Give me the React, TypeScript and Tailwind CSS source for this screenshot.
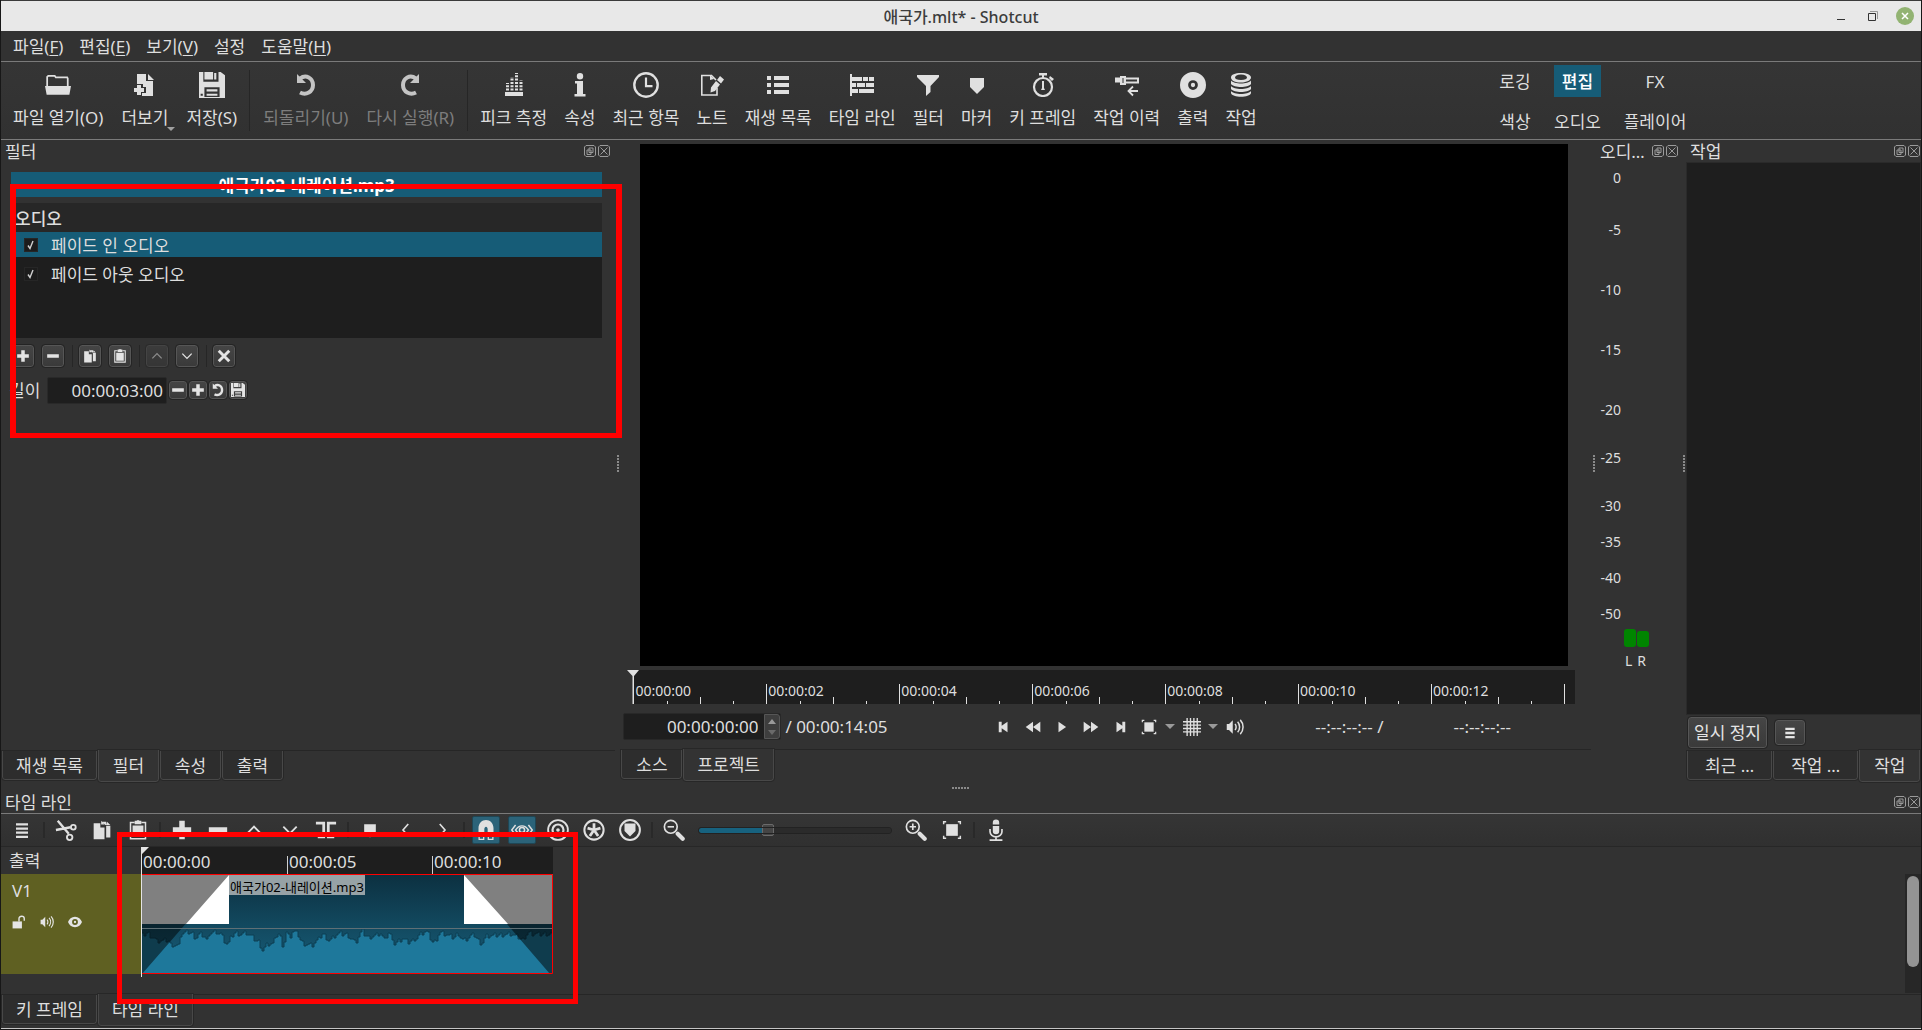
import React from "react";

type Kids = { children?: React.ReactNode };

/* ---------- icons ---------- */

function Icon({ children, size = "size-6", className = "" }: Kids & { size?: string; className?: string }) {
  return (
    <svg viewBox="0 0 24 24" className={`${size} ${className} shrink-0 fill-current`} aria-hidden="true">
      {children}
    </svg>
  );
}

const line = (w: number) => ({ fill: "none", stroke: "currentColor", strokeWidth: w });

const art: Record<string, React.ReactNode> = {
  open: (
    <>
      <path {...line(1.6)} d="M2 13V4.500l1-1h6l1 1.500h10.500l.500 1V13" />
      <path d="M0 13h24l-1.500 8h-21z" />
    </>
  ),
  addDoc: (
    <>
      <path d="M4 1h9v7h7v15H9v-3h4v-6h-3v-3H4z" />
      <path d="M15 1l6 6h-6z" />
      <path d="M4 12h4v3h3v4H8v3H4v-3H1v-4h3z" />
    </>
  ),
  save: (
    <path
      fillRule="evenodd"
      d="M0 0h4v9h14V0h2l4 3v21H0zM5 0h8v7H5zM14 1v6h2V1zM5 14v9h14v-9zM7 16h10v2H7zM7 20h10v2H7zM1.500 20v2h2v-2z"
    />
  ),
  undo: (
    <>
      <path {...line(4)} d="M6 5.500C12 1 19 5 19 12s-7 10.500-13 7.500" />
      <path d="M3 1v9h9z" />
    </>
  ),
  redo: (
    <>
      <path {...line(4)} d="M18 5.500C12 1 5 5 5 12s7 10.500 13 7.500" />
      <path d="M21 1v9h-9z" />
    </>
  ),
  peak: (
    <>
      <path d="M3 19h18v4H3z" />
      <path {...line(3)} strokeDasharray="2 1.300" d="M5.500 17.500V10M10 17.500V4M14.500 17.500V0M19 17.500V7" />
    </>
  ),
  info: <path d="M12 0a3.200 3.200 0 100 6.400A3.200 3.200 0 0012 0zM7 8h8v13h2.500v2.500h-11V21H9V10.500H7z" />,
  clock: (
    <>
      <circle {...line(2.2)} cx="12" cy="12" r="10.800" />
      <path {...line(2)} d="M12 5v8h6" />
    </>
  ),
  note: (
    <>
      <path {...line(1.6)} d="M17 15v7H1.800V2.500H11M11 2l5 5" />
      <path d="M10 2l4 4-4 1zM20 3l4 3.500-3 4L17 7zM16 8l4 3.500-5 6.500-4.500 1.500.500-5z" />
    </>
  ),
  list: <path d="M1 3h4v4H1zM8 3h15v4H8zM1 10h4v4H1zM8 10h15v4H8zM1 17h4v4H1zM8 17h15v4H8z" />,
  timeline: (
    <path d="M0 1h2v22H0zM2 4h10v4H2zM13 4h5v4h-5zM19 4h5v4h-5zM2 10h4v4H2zM7 10h8v4H7zM16 10h8v4h-8zM2 16h6v4H2zM9 16h15v4H9z" />
  ),
  filter: <path d="M1 2h22v2l-8.500 9v6L10 23V13L1 4z" />,
  marker: <path d="M5 5h14v9l-7 7-7-7z" />,
  stopwatch: (
    <>
      <circle {...line(2.2)} cx="12" cy="14" r="9" />
      <path d="M8 0h8v2.500h-3V5h-2V2.500H8zM11 8h2v7l1 2h-4l1-2zM19 3l4 3-2 2-3-3z" />
    </>
  ),
  history: (
    <>
      <path fillRule="evenodd" d="M0 4.500h5V3h6v1.500h13v6H11V12H5v-2.500H0zM7.500 5v5h1V5zM11 6.500v2h11v-2z" />
      <path {...line(1.800)} d="M14 18h9M18 13.500L13.500 18l4.500 4.500" />
    </>
  ),
  disc: (
    <path
      fillRule="evenodd"
      d="M12 0a12 12 0 100 24 12 12 0 000-24zm0 7.500a4.500 4.500 0 110 9 4.500 4.500 0 010-9zm0 2.500a2 2 0 100 4 2 2 0 000-4z"
    />
  ),
  jobs: (
    <>
      <path fillRule="evenodd" d="M12 0c6 0 10 2 10 4.500S18 9.500 12 9.500 2 7.500 2 4.500 6 0 12 0zm0 1.500C8 1.500 6 3 6 4.500S8 7 12 7s6-1 6-2.500-2-3-6-3z" />
      <path d="M2 7.500c3 4 17 4 20 0v3.500c-3 4-17 4-20 0zM2 13c3 4 17 4 20 0v3c-3 4-17 4-20 0zM2 18c3 4 17 4 20 0v2c-1 5-19 5-20 0z" />
    </>
  ),
  plus: <path d="M9 2h6v7h7v6h-7v7H9v-7H2V9h7z" />,
  minus: <path d="M2 9h20v6H2z" />,
  copy: (
    <path d="M2 4h8v5h5v14H2zM11 1l4 4.500h-4zM17 7h5v14h-5v-13zM12 2h5l1 4h-2zM18 2l4 4h-4z" />
  ),
  paste: (
    <>
      <path {...line(1.800)} d="M8 3H3v19.500h18V3h-5" />
      <path d="M8 1h2l2-1 2 1h2v4H8zM5.500 6.500h13V20h-13z" />
    </>
  ),
  up: <path {...line(2.200)} d="M4 16l8-8 8 8" />,
  down: <path {...line(2.200)} d="M4 8l8 8 8-8" />,
  left: <path {...line(2.200)} d="M15 4l-7 8 7 8" />,
  right: <path {...line(2.200)} d="M9 4l7 8-7 8" />,
  close: <path {...line(5)} d="M3 3l18 18M21 3L3 21" />,
  menu: <path d="M4 3h16v3H4zM4 8.500h16v3H4zM4 14h16v3H4zM4 19.500h16v3H4z" />,
  menu3: <path d="M4 3h16v4H4zM4 10h16v4H4zM4 17h16v4H4z" />,
  cut: (
    <>
      <circle {...line(2)} cx="20" cy="9" r="2.600" />
      <circle {...line(2)} cx="16" cy="20" r="3" />
      <path {...line(2.600)} d="M3 2l12 14M1 12l16-3" />
    </>
  ),
  split: <path d="M1 3h10v18H8V6H1zM13 3h10v3h-7v15h-3zM3 19h5v2H3zM16 19h5v2h-5z" />,
  magnet: (
    <path
      fillRule="evenodd"
      d="M3 24V10C3 4 7 0 12 0s9 4 9 10v14h-7V11c0-2-1-3-2-3s-2 1-2 3v13zM4.500 19v3.500h4V19zM15.500 19v3.500h4V19z"
    />
  ),
  scrub: (
    <>
      <path {...line(1.600)} d="M5 12c4-6 10-6 14 0-4 6-10 6-14 0zM5 6.500L.8 12 5 17.500M19 6.500l4.200 5.500-4.200 5.500" />
      <circle {...line(1.600)} cx="12" cy="12" r="2.800" />
    </>
  ),
  ripple: (
    <>
      <circle {...line(2)} cx="12" cy="12" r="10.800" />
      <circle {...line(2.400)} cx="12" cy="12" r="6" />
      <circle cx="12" cy="12" r="2" />
    </>
  ),
  rippleAll: (
    <>
      <circle {...line(2.200)} cx="12" cy="12" r="10.500" />
      <path {...line(3)} d="M12 4.500V12M5 10l7 2M19 10l-7 2M7.500 18.500L12 12M16.500 18.500L12 12" />
    </>
  ),
  rippleMark: (
    <>
      <circle {...line(2.200)} cx="12" cy="12" r="10.800" />
      <path d="M6 5h12v8l-6 6-6-6z" />
    </>
  ),
  zoomOut: (
    <>
      <circle {...line(1.800)} cx="8.500" cy="8.500" r="7" />
      <path {...line(1.800)} d="M5 8.500h7" />
      <path {...line(4.500)} strokeLinecap="round" d="M16 16l5.500 5.500" />
    </>
  ),
  zoomIn: (
    <>
      <circle {...line(1.800)} cx="8.500" cy="8.500" r="7" />
      <path {...line(1.800)} d="M5 8.500h7M8.500 5v7" />
      <path {...line(4.500)} strokeLinecap="round" d="M16 16l5.500 5.500" />
    </>
  ),
  fit: (
    <>
      <path d="M5 5h14v14H5z" />
      <path {...line(1.800)} d="M2 5V2h3M19 2h3v3M22 19v3h-3M5 22H2v-3" />
    </>
  ),
  mic: (
    <>
      <path d="M8.500 4a3.500 3.500 0 017 0v2h-7zM8.500 7.500h7V13a3.500 3.500 0 01-7 0z" />
      <path {...line(1.800)} d="M5.500 11v3c0 3 3 5.500 6.500 5.500s6.500-2.500 6.500-5.500v-3M12 19v3M5 23h14" />
    </>
  ),
  first: <path d="M3 3h5v7l10-7v18L8 14v7H3z" />,
  rewind: <path d="M12 4v16L1 12zM23 4v16l-11-8z" />,
  play: <path d="M6 3l13 9-13 9z" />,
  forward: <path d="M1 4l11 8-11 8zM12 4l11 8-11 8z" />,
  last: <path d="M21 3h-5v7L6 3v18l10-7v7h5z" />,
  grid: <path {...line(1.800)} d="M5.500 0v24M10 0v24M14.500 0v24M19 0v24M0 5h24M0 9.500h24M0 14h24M0 18.500h24" />,
  speaker: (
    <>
      <path d="M1 8h3l5-5v18l-5-5H1z" />
      <path {...line(2)} d="M12 8c2 2 2 6 0 8M15.500 5c3.500 4 3.500 10 0 14M19 2.500c5 5.500 5 13.500 0 19" />
    </>
  ),
  unlock: (
    <>
      <path d="M1 11h16v12H1z" />
      <path {...line(2.400)} d="M12 11V6c0-5 9-5 9 0v4" />
    </>
  ),
  eye: (
    <path
      fillRule="evenodd"
      d="M12 3C6 3 2 7 0 12c2 5 6 9 12 9s10-4 12-9c-2-5-6-9-12-9zm0 4a5 5 0 110 10 5 5 0 010-10zm0 3a2 2 0 100 4 2 2 0 000-4z"
    />
  ),
};

/* ---------- shared pieces ---------- */

function DockButtons() {
  const cls = "grid size-3 place-items-center text-[#9a9a9a]";
  return (
    <span className="mb-0.5 flex gap-0.5">
      <button className={cls} aria-label="분리">
        <svg viewBox="0 0 12 12" className="size-3 fill-none stroke-current">
          <path d="M2 .5h8l1.500 1.500v8L10 11.500H2L.5 10V2zM5 3h4v4.500H5zM3 5h4v4.500H3z" />
        </svg>
      </button>
      <button className={cls} aria-label="닫기">
        <svg viewBox="0 0 12 12" className="size-3 fill-none stroke-current">
          <path d="M2 .5h8l1.500 1.500v8L10 11.500H2L.5 10V2zM2.500 2.500l7 7M9.500 2.500l-7 7" />
        </svg>
      </button>
    </span>
  );
}

function DockTitle({ title }: { title: string }) {
  return (
    <div className="flex h-5 shrink-0 items-center justify-between pr-px pl-1">
      <h2 className="leading-[22px]">{title}</h2>
      <DockButtons />
    </div>
  );
}

function Tabs({ items, active, wide }: { items: string[]; active: number; wide?: boolean }) {
  return (
    <div role="tablist" className="flex h-8 shrink-0 items-start gap-px border-t border-[#262626] pl-px">
      {items.map((t, i) => (
        <button
          key={t}
          role="tab"
          aria-selected={i === active}
          className={
            "min-w-[61px] rounded-b-[3px] border border-t-0 border-[#484848] whitespace-nowrap leading-[30px] outline-1 outline-[#272727] " +
            (wide && i !== active ? "px-[17px] " : "px-[13px] ") +
            (i === active ? "-mt-px h-8 bg-[#333] pt-px" : "h-[29px] bg-[#2d2d2d]")
          }
        >
          {t}
        </button>
      ))}
    </div>
  );
}

function Grip({ vertical }: { vertical?: boolean }) {
  return (
    <div
      className={
        vertical
          ? "h-[18px] w-0.5 bg-[repeating-linear-gradient(#8a8a8a_0_2px,transparent_2px_3px)]"
          : "h-0.5 w-[18px] bg-[repeating-linear-gradient(90deg,#8a8a8a_0_2px,transparent_2px_3px)]"
      }
    />
  );
}

function Splitter() {
  return (
    <div className="flex w-[5px] shrink-0 justify-center pt-[315px]">
      <Grip vertical />
    </div>
  );
}

/* ---------- top bars ---------- */

function TitleBar() {
  return (
    <header className="relative flex h-[31px] items-center justify-center border-t border-[#3a3a3a] bg-[#e8e8e8] font-medium text-[#3c3c3c]">
      <h1 className="pt-0.5 text-base leading-7">애국가.mlt* - Shotcut</h1>
      <div className="absolute right-[7px] flex items-center gap-3.5">
        <button aria-label="최소화" className="grid size-[18px] place-items-center">
          <span className="mt-1.5 h-px w-2 bg-[#333]" />
        </button>
        <button aria-label="최대화" className="grid size-[18px] place-items-center">
          <svg viewBox="0 0 12 12" className="size-3 fill-none">
            <path d="M3 1.500h7.500V9" stroke="#999" />
            <path d="M1.500 3.500h7v7h-7z" stroke="#333" />
          </svg>
        </button>
        <button aria-label="닫기" className="grid size-[18px] place-items-center rounded-full bg-[#92b372]">
          <svg viewBox="0 0 8 8" className="size-2 stroke-white" strokeWidth="1.500">
            <path d="M1 1l6 6M7 1L1 7" />
          </svg>
        </button>
      </div>
    </header>
  );
}

const menus: [string, string][] = [
  ["파일", "F"],
  ["편집", "E"],
  ["보기", "V"],
  ["설정", ""],
  ["도움말", "H"],
];

function MenuBar() {
  return (
    <nav className="flex h-[30px] items-center pt-0.5 pl-1">
      {menus.map(([name, key]) => (
        <button key={name} className="px-2 leading-7">
          {name}
          {key && (
            <>
              (<span className="underline underline-offset-2">{key}</span>)
            </>
          )}
        </button>
      ))}
    </nav>
  );
}

function Tool({ icon, label, off, arrow, tight }: { icon: string; label: string; off?: boolean; arrow?: boolean; tight?: boolean }) {
  const large = icon === "save" || icon === "clock" || icon === "disc" || icon === "open";
  return (
    <button
      disabled={off}
      className={`relative flex flex-col items-center gap-1.5 pt-2.5 pl-[9px] whitespace-nowrap ${tight ? "pr-2" : "pr-[9px]"} ${off ? "text-[#7d7d7d]" : ""}`}
    >
      <Icon size={large ? "size-[26px]" : "size-6 my-px"} className={off ? "text-[#c4c4c4]" : "text-[#e0e0e0]"}>
        {art[icon]}
      </Icon>
      <span className="leading-7">{label}</span>
      {arrow && (
        <span className="absolute right-0.5 bottom-2 border-x-4 border-t-4 border-x-transparent border-t-[#a0a0a0]" />
      )}
    </button>
  );
}

function VSep() {
  return <span className="my-2 w-px shrink-0 bg-[#262626]" />;
}

const tools: [string, string][] = [
  ["peak", "피크 측정"],
  ["info", "속성"],
  ["clock", "최근 항목"],
  ["note", "노트"],
  ["list", "재생 목록"],
  ["timeline", "타임 라인"],
  ["filter", "필터"],
  ["marker", "마커"],
  ["stopwatch", "키 프레임"],
  ["history", "작업 이력"],
  ["disc", "출력"],
  ["jobs", "작업"],
];

function ToolBar() {
  return (
    <div className="flex h-[79px] shrink-0 border-y border-[#7a7a7a] bg-linear-to-b from-[#353535] to-[#313131] pl-[3px]">
      <Tool icon="open" label="파일 열기(O)" />
      <Tool icon="addDoc" label="더보기" arrow />
      <Tool icon="save" label="저장(S)" />
      <span className="w-[3px]" />
      <VSep />
      <span className="w-1" />
      <Tool icon="undo" label="되돌리기(U)" off />
      <Tool icon="redo" label="다시 실행(R)" off />
      <span className="w-1" />
      <VSep />
      <span className="w-[3px]" />
      {tools.map(([i, l]) => (
        <Tool key={l} icon={i} label={l} tight />
      ))}
      <div className="mr-[228px] ml-auto grid auto-rows-[32px] grid-cols-[46px_47px_76px] gap-x-4 gap-y-2 pt-[3px]">
        {["로깅", "편집", "FX", "색상", "오디오", "플레이어"].map((l) => (
          <button
            key={l}
            className={`pt-0.5 whitespace-nowrap ${l === "편집" ? "bg-[#165c77] font-medium text-white" : ""} ${l === "오디오" ? "-mx-2" : ""}`}
          >
            {l}
          </button>
        ))}
      </div>
    </div>
  );
}

/* ---------- filter dock ---------- */

const raised =
  "grid place-items-center rounded-[3px] border border-[#565656] bg-linear-to-b from-[#454545] to-[#3a3a3a] outline-1 outline-[#242424] text-[#e4e4e4]";

function FilterButton({ icon, label, off }: { icon: string; label: string; off?: boolean }) {
  return (
    <button disabled={off} aria-label={label} className={`${raised} h-[22px] w-[22px] ${off ? "opacity-50" : ""}`}>
      <Icon size="size-3.5">{art[icon]}</Icon>
    </button>
  );
}

function MiniButton({ icon, label }: { icon: string; label: string }) {
  return (
    <button aria-label={label} className={`${raised} h-[18px] w-[18px]`}>
      <Icon size="size-3.5">{art[icon]}</Icon>
    </button>
  );
}

function FilterRow({ name, selected }: { name: string; selected?: boolean }) {
  return (
    <li className={selected ? "h-[25px] bg-[#165c77]" : "mt-1 h-[25px]"}>
      <label className="flex h-full items-center gap-[13px] pl-[13px]">
        <span className="grid size-3.5 place-items-center">
          <input
            type="checkbox"
            defaultChecked
            className="col-start-1 row-start-1 size-3.5 appearance-none border border-[#262626] bg-[#1c1c1c]"
          />
          <svg viewBox="0 0 14 14" className="pointer-events-none col-start-1 row-start-1 size-3.5 fill-none stroke-[#cfcfcf]" strokeWidth="1.400">
            <path d="M4 7.500l2 3 3-7.500" />
          </svg>
        </span>
        <span className="pt-0.5 leading-6">{name}</span>
      </label>
    </li>
  );
}

function FilterDock() {
  const sep = <span className="h-[22px] w-px bg-[#262626]" />;
  return (
    <section className="flex w-[32%] shrink-0 flex-col">
      <div className="pt-0.5 pr-1">
        <DockTitle title="필터" />
      </div>
      <div className="relative mr-[13px] ml-2.5 flex-1 pt-2.5">
        <div className="h-[25px] overflow-hidden bg-[#165c77] text-center leading-7 font-bold text-white">애국가02-내레이션.mp3</div>
        <div className="mt-1.5 h-[135px] bg-[#1e1e1e]">
          <h3 className="h-[29px] bg-[#272727] pl-1 leading-8 font-medium">오디오</h3>
          <ul>
            <FilterRow name="페이드 인 오디오" selected />
            <FilterRow name="페이드 아웃 오디오" />
          </ul>
        </div>
        <div className="mt-[7px] flex items-center gap-2 pl-px">
          <FilterButton icon="plus" label="추가" />
          <FilterButton icon="minus" label="제거" />
          {sep}
          <span className="-ml-0.5 flex gap-2">
            <FilterButton icon="copy" label="복사" />
            <FilterButton icon="paste" label="붙여넣기" />
          </span>
          {sep}
          <span className="-ml-0.5 flex gap-2">
            <FilterButton icon="up" label="위로" off />
            <FilterButton icon="down" label="아래로" />
          </span>
          {sep}
          <span className="-ml-0.5">
            <FilterButton icon="close" label="선택 해제" />
          </span>
        </div>
        <div className="mt-2 flex items-center gap-0.5">
          <label htmlFor="len" className="-ml-0.5 w-9 pt-0.5 leading-7">길이</label>
          <input
            id="len"
            defaultValue="00:00:03:00"
            className="h-[27px] w-[120px] rounded-xs border border-[#292929] bg-[#1e1e1e] pr-[3px] text-right"
          />
          <MiniButton icon="minus" label="줄이기" />
          <MiniButton icon="plus" label="늘리기" />
          <MiniButton icon="undo" label="초기화" />
          <MiniButton icon="save" label="저장" />
        </div>
        <div className="pointer-events-none absolute top-[22px] -right-5 -left-px h-[254px] border-x-[6px] border-y-[5px] border-[#f00]" />
      </div>
      <Tabs items={["재생 목록", "필터", "속성", "출력"]} active={1} />
    </section>
  );
}

/* ---------- player ---------- */

function PlayerRuler() {
  const marks = ["00:00:00", "00:00:02", "00:00:04", "00:00:06", "00:00:08", "00:00:10", "00:00:12"];
  return (
    <div className="relative mr-4 ml-[13px] flex h-[34px] shrink-0 items-end bg-[#1e1e1e]">
      {marks.map((m) => (
        <div key={m} className="relative h-5 flex-1 border-l border-[#e0e0e0] pl-px text-sm leading-3.5">
          {m}
          <span className="absolute bottom-0 left-1/4 h-[3px] w-px bg-[#e0e0e0]" />
          <span className="absolute bottom-0 left-1/2 h-[7px] w-px bg-[#e0e0e0]" />
          <span className="absolute bottom-0 left-3/4 h-[3px] w-px bg-[#e0e0e0]" />
        </div>
      ))}
      <div className="h-5 w-[11px] border-l border-[#e0e0e0]" />
      <svg viewBox="0 0 12 34" className="absolute top-0 -left-[6px] h-[34px] w-3 fill-[#e0e0e0]">
        <path d="M0 0h12L7 6v28H5.500V6z" />
      </svg>
    </div>
  );
}

function Transport() {
  const arrow = <span className="border-x-[5px] border-t-[5px] border-x-transparent border-t-[#9a9a9a]" />;
  const ic = (name: string, label: string, size = "size-3.5") => (
    <button aria-label={label} className="grid w-[29px] place-items-center text-[#e0e0e0]">
      <Icon size={size}>{art[name]}</Icon>
    </button>
  );
  return (
    <div className="flex h-[45px] shrink-0 items-center pl-[3px]">
      <div className="flex h-[27px] w-[158px] rounded-xs border border-[#282828] bg-[#1e1e1e]">
        <input aria-label="현재 위치" defaultValue="00:00:00:00" className="w-0 flex-1 bg-transparent pr-1.5 text-right" />
        <span className="flex w-4 flex-col items-center justify-center gap-1.5 rounded-r-[3px] border border-[#565656] bg-[#3e3e3e]">
          <button aria-label="증가" className="border-x-4 border-b-[5px] border-x-transparent border-b-[#9a9a9a]" />
          <button aria-label="감소" className="border-x-4 border-t-[5px] border-x-transparent border-t-[#6a6a6a]" />
        </span>
      </div>
      <span className="pl-1 leading-7 whitespace-nowrap">/ 00:00:14:05</span>
      <div className="mr-[66px] ml-auto flex items-center">
        {ic("first", "처음")}
        {ic("rewind", "되감기", "size-4")}
        {ic("play", "재생")}
        {ic("forward", "빨리 감기", "size-4")}
        {ic("last", "끝")}
        {ic("fit", "확대", "size-4")}
        <span className="-mx-px grid w-4 place-items-center">{arrow}</span>
        {ic("grid", "격자", "size-[18px]")}
        <span className="-mx-px grid w-4 place-items-center">{arrow}</span>
        {ic("speaker", "음량", "size-[18px]")}
      </div>
      <span className="leading-7">--:--:--:-- /</span>
      <span className="pr-20 pl-[70px] leading-7">--:--:--:--</span>
    </div>
  );
}

function Player() {
  return (
    <section className="flex min-w-0 flex-1 flex-col">
      <div className="mt-1 mr-[23px] mb-1 ml-5 flex-1 bg-black" />
      <PlayerRuler />
      <Transport />
      <div className="-mb-px">
        <Tabs items={["소스", "프로젝트"]} active={1} />
      </div>
      <div className="h-0.5" />
    </section>
  );
}

/* ---------- right docks ---------- */

function AudioDock() {
  const marks: [string, string][] = [
    ["0", ""],
    ["-5", "mt-8"],
    ["-10", "mt-10"],
    ["-15", "mt-10"],
    ["-20", "mt-10"],
    ["-25", "mt-7"],
    ["-30", "mt-7"],
    ["-35", "mt-4"],
    ["-40", "mt-4"],
    ["-50", "mt-4"],
  ];
  return (
    <section className="w-[85px] shrink-0 pt-0.5">
      <div className="pr-0.5">
        <DockTitle title="오디…" />
      </div>
      <div className="mt-1.5 flex w-[25px] flex-col text-right text-sm leading-5">
        {marks.map(([m, gap]) => (
          <span key={m} className={gap}>
            {m}
          </span>
        ))}
      </div>
      <div className="mt-[5px] ml-7 flex items-end gap-px">
        <span className="h-[18px] w-3 rounded-[3px] bg-[#008500]" />
        <span className="h-4 w-3 rounded-[3px] bg-[#008500]" />
      </div>
      <div className="mt-1 ml-[29px] flex gap-[5px] text-sm leading-5">
        <span>L</span>
        <span>R</span>
      </div>
    </section>
  );
}

function JobsDock() {
  return (
    <section className="flex w-[235px] shrink-0 flex-col pt-0.5">
      <DockTitle title="작업" />
      <div className="flex-1 border border-[#2a2a2a] bg-[#1e1e1e]" />
      <div className="flex h-[35px] items-center gap-2 pl-0.5">
        <button className={`${raised} h-[31px] px-[5px] leading-7`}>일시 정지</button>
        <button aria-label="메뉴" className={`${raised} h-[25px] w-[30px]`}>
          <Icon size="size-3.5">{art.menu3}</Icon>
        </button>
      </div>
      <Tabs items={["최근 …", "작업 …", "작업"]} active={2} wide />
    </section>
  );
}

/* ---------- timeline ---------- */

function TB({ icon, label, on, size = "size-[22px]" }: { icon: string; label: string; on?: boolean; size?: string }) {
  return (
    <button
      aria-label={label}
      className={`grid h-7 w-7 shrink-0 place-items-center text-[#e0e0e0] ${on ? "rounded-xs border border-[#1f4654] bg-[#2b6379]" : ""}`}
    >
      <Icon size={size}>{art[icon]}</Icon>
    </button>
  );
}

function TimelineTools() {
  const sep = <span className="-mx-px h-4 w-0.5 shrink-0 bg-[#292929]" />;
  return (
    <div className="flex h-[34px] items-center gap-2 border-t border-b border-t-[#7a7a7a] border-b-[#272727] bg-linear-to-b from-[#353535] to-[#303030] pl-[7px]">
      <TB icon="menu" label="메뉴" size="size-[18px]" />
      {sep}
      <TB icon="cut" label="잘라내기" />
      <TB icon="copy" label="복사" size="size-5" />
      <TB icon="paste" label="붙여넣기" size="size-5" />
      {sep}
      <TB icon="plus" label="추가" />
      <TB icon="minus" label="제거" />
      <TB icon="up" label="들어내기" size="size-5" />
      <TB icon="down" label="덮어쓰기" size="size-5" />
      <TB icon="split" label="나누기" />
      {sep}
      <TB icon="marker" label="마커" size="size-5" />
      <TB icon="left" label="이전 마커" size="size-[18px]" />
      <TB icon="right" label="다음 마커" size="size-[18px]" />
      {sep}
      <TB icon="magnet" label="스냅" on size="size-5" />
      <TB icon="scrub" label="드래그 스크럽" on size="size-[22px]" />
      <TB icon="ripple" label="리플" />
      <TB icon="rippleAll" label="모든 트랙 리플" />
      <TB icon="rippleMark" label="마커 리플" />
      {sep}
      <TB icon="zoomOut" label="축소" />
      <input
        type="range"
        aria-label="확대 비율"
        defaultValue={35}
        className="mx-[3px] h-[5px] w-[192px] appearance-none rounded-xs bg-[linear-gradient(90deg,#17627f_35%,#2b2b2b_35%)] outline-1 outline-[#222] [&::-webkit-slider-thumb]:size-3 [&::-webkit-slider-thumb]:appearance-none [&::-webkit-slider-thumb]:rounded-xs [&::-webkit-slider-thumb]:border [&::-webkit-slider-thumb]:border-[#6a6a6a] [&::-webkit-slider-thumb]:bg-[#454545]"
      />
      <TB icon="zoomIn" label="확대" />
      <TB icon="fit" label="맞춤" size="size-5" />
      {sep}
      <TB icon="mic" label="녹음" />
    </div>
  );
}

const peaks: [number, number][] = [
  [0, 61], [4, 58], [10, 62], [14, 66], [20, 66], [26, 66], [28, 70], [36, 71], [38, 60], [44, 58], [50, 59], [53, 64], [57, 59],
  [62, 62], [65, 67], [68, 58], [74, 57], [78, 59], [82, 66], [85, 70], [88, 64], [92, 58], [98, 59], [104, 58], [108, 61],
  [112, 65], [116, 67], [120, 75], [124, 70], [131, 69], [134, 61], [137, 59], [141, 73], [143, 60], [145, 56], [147, 66],
  [149, 56], [155, 59], [159, 67], [165, 70], [170, 70], [175, 66], [180, 59], [187, 66], [195, 59], [205, 60], [209, 64],
  [213, 68], [219, 56], [225, 63], [238, 59], [242, 66], [246, 58], [250, 63], [252, 69], [260, 64], [266, 68], [274, 63],
  [283, 56], [286, 60], [291, 69], [297, 58], [304, 60], [311, 64], [315, 58], [321, 66], [331, 60], [339, 69], [344, 61],
  [354, 61], [368, 59], [380, 65], [385, 58], [395, 60], [408, 59],
];

const wave = (() => {
  let d = "";
  let k = 0;
  for (let x = 0; x <= 408; x += 2) {
    while (k < peaks.length - 2 && peaks[k + 1][0] <= x) k++;
    const [x0, y0] = peaks[k];
    const [x1, y1] = peaks[k + 1];
    const jitter = ((x * 37) % 11) / 2 - 2;
    const y = Math.round(y0 + ((y1 - y0) * (x - x0)) / (x1 - x0) + jitter);
    d += `${x ? "V" : "M0 "}${Math.max(55, y)}H${x + 2}`;
  }
  return d;
})();

function Clip() {
  return (
    <div className="relative h-[100px] w-[411px]">
      <svg viewBox="0 0 411 100" className="block h-[100px] w-[411px]">
        <defs>
          <linearGradient id="clip" x1="0" y1="0" x2="0" y2="1">
            <stop offset="0" stopColor="#0c3040" />
            <stop offset="1" stopColor="#18607c" />
          </linearGradient>
        </defs>
        <path fill="url(#clip)" d="M0 0h411v100H0z" />
        <path fill="#1e789b" d={`${wave}V100H0z`} />
        <path fill="none" stroke="#0d3e52" d={wave} />
        <path fill="#000" fillOpacity=".5" d="M0 0h87L0 100zM322 0h89v100h-3z" />
        <path stroke="#5f6f75" d="M0 54.500h411" />
        <path fill="#808080" d="M0 0h87v50H0zM322 0h89v50h-89z" />
        <path fill="#fff" d="M87 1v49H44zM322 1v49h44z" />
        <path fill="none" stroke="#f00" d="M0 .5h410.500v99H0" />
      </svg>
      <span className="absolute top-px left-[87px] h-5 overflow-hidden bg-[#97a2a6] px-px text-[13px] leading-6 whitespace-nowrap text-black">
        애국가02-내레이션.mp3
      </span>
    </div>
  );
}

function Timeline() {
  return (
    <section className="relative flex shrink-0 flex-col pb-0.5">
      <DockTitle title="타임 라인" />
      <TimelineTools />
      <div className="flex min-h-[147px]">
        <div className="w-[141px] shrink-0">
          <div className="h-[27px] pl-2 leading-7">출력</div>
          <div className="h-[100px] bg-[#5f6022] pt-[3px] pl-[11px]">
            <div className="leading-7">V1</div>
            <div className="mt-2.5 flex gap-3.5 text-[#e4e4e4]">
              <button aria-label="잠금"><Icon size="size-3.5">{art.unlock}</Icon></button>
              <button aria-label="음소거"><Icon size="size-3.5">{art.speaker}</Icon></button>
              <button aria-label="숨기기"><Icon size="size-3.5">{art.eye}</Icon></button>
            </div>
          </div>
        </div>
        <div className="relative w-[411px] shrink-0">
          <div className="flex h-[27px] items-end overflow-hidden bg-[#1e1e1e]">
            {["00:00:00", "00:00:05", "00:00:10"].map((t, i) => (
              <span key={t} className={`h-[18px] w-[145px] shrink-0 pl-px leading-3 ${i ? "border-l border-[#d0d0d0]" : ""}`}>
                {t}
              </span>
            ))}
          </div>
          <Clip />
          <svg viewBox="0 0 8 130" className="absolute top-0 -left-px h-[130px] w-2 fill-[#e4e4e4]">
            <path d="M0 0h8L1 7v123H0z" />
          </svg>
        </div>
        <div className="mt-[27px] mb-px ml-auto w-4 bg-[#272727] px-0.5 pt-0.5">
          <div className="h-[91px] w-3 rounded-full bg-[#949494]" />
        </div>
      </div>
      <Tabs items={["키 프레임", "타임 라인"]} active={1} />
      <div className="pointer-events-none absolute top-[39px] left-[116px] h-[172px] w-[461px] border-[5px] border-[#f00]" />
    </section>
  );
}

export default function App() {
  return (
    <div className="flex min-h-screen flex-col bg-[#171717] px-px pb-px font-['Noto_Sans','Noto_Sans_CJK_KR',sans-serif] text-[17px] text-[#dedede]">
      <TitleBar />
      <div className="flex flex-1 flex-col border-b border-[#c4c4c4] bg-[#323232]">
        <MenuBar />
        <ToolBar />
        <main className="flex flex-1">
          <FilterDock />
          <Splitter />
          <Player />
          <Splitter />
          <AudioDock />
          <Splitter />
          <JobsDock />
        </main>
        <div className="flex h-[11px] shrink-0 items-center justify-center">
          <Grip />
        </div>
        <Timeline />
      </div>
    </div>
  );
}
